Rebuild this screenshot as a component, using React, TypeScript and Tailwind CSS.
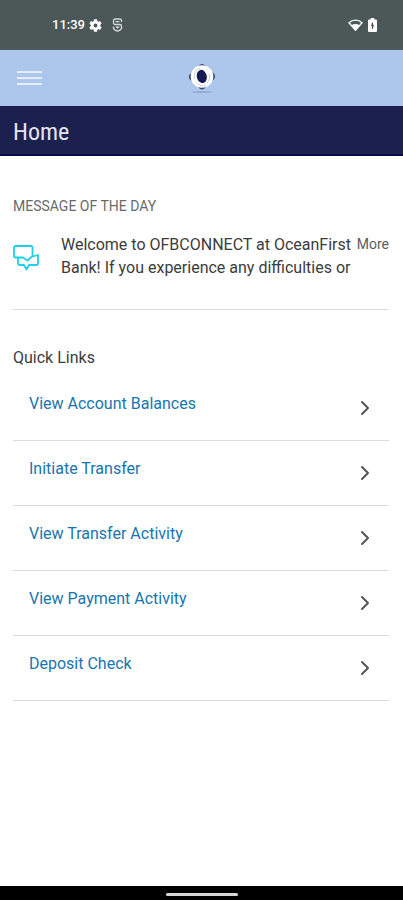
import { ChevronRight } from "lucide-react";

const quickLinks = [
  "View Account Balances",
  "Initiate Transfer",
  "View Transfer Activity",
  "View Payment Activity",
  "Deposit Check",
];

function StatusBar() {
  return (
    <div className="flex h-[50px] items-center justify-between bg-[#4c5757] pl-[52px] pr-[26px] text-white">
      <div className="flex items-center">
        <span className="w-[30px] text-[13px] font-medium leading-4">11:39</span>
        {/* Settings */}
        <svg className="ml-[7px] h-[13px] w-[13px]" viewBox="2 2 20 20" fill="currentColor" aria-hidden="true">
          <path d="M19.14 12.94c.04-.3.06-.61.06-.94s-.02-.64-.07-.94l2.03-1.58a.49.49 0 0 0 .12-.61l-1.92-3.32a.49.49 0 0 0-.59-.22l-2.39.96c-.5-.38-1.03-.7-1.62-.94l-.36-2.54a.48.48 0 0 0-.48-.41h-3.84a.47.47 0 0 0-.47.41l-.36 2.54c-.59.24-1.13.57-1.62.94l-2.39-.96a.48.48 0 0 0-.59.22L2.74 8.87a.47.47 0 0 0 .12.61l2.03 1.58c-.05.3-.09.63-.09.94s.02.64.07.94l-2.03 1.58a.49.49 0 0 0-.12.61l1.92 3.32c.12.22.37.29.59.22l2.39-.96c.5.38 1.03.7 1.62.94l.36 2.54c.05.24.24.41.48.41h3.84c.24 0 .44-.17.47-.41l.36-2.54c.59-.24 1.13-.56 1.62-.94l2.39.96c.22.08.47 0 .59-.22l1.92-3.32a.47.47 0 0 0-.12-.61l-2.01-1.58zM12 15a3 3 0 1 1 0-6 3 3 0 0 1 0 6z" />
        </svg>
        {/* Security badge */}
        <svg className="ml-[10px] h-[14px] w-[11px] text-[#d5dada]" viewBox="0 0 11 14" fill="none" stroke="currentColor" strokeWidth="1.3" aria-hidden="true">
          <path d="M9.500 4V2.500A1.500 1.500 0 0 0 8 1H3a1.500 1.500 0 0 0-1.500 1.500V5A1.500 1.500 0 0 0 3 6.500h5A1.500 1.500 0 0 1 9.500 8v2.200C9 12 7.500 12.800 5.500 13 3.500 12.800 2 12 1.500 10.200V8.500" />
          <path d="M3.500 3.700h4" />
          <path d="M3.700 8.800h3.600l-1.800 1.800z" fill="currentColor" strokeWidth=".6" />
        </svg>
      </div>
      <div className="flex items-center gap-[5px]">
        {/* Wifi */}
        <svg className="h-3 w-[15px]" viewBox="0 0 15 12" aria-hidden="true">
          <path d="M1 3.800C4.600.3 10.400.3 14 3.800L7.500 11.300z" fill="none" stroke="currentColor" strokeWidth="1.300" />
          <path d="M3.500 6.200c2.400-1.700 5.600-1.700 8 0l-4 5z" fill="currentColor" />
        </svg>
        {/* Battery */}
        <svg className="h-[14px] w-[9px]" viewBox="0 0 9 14" aria-hidden="true">
          <path d="M2.700 0h3.600v1.400H8a1 1 0 0 1 1 1V13a1 1 0 0 1-1 1H1a1 1 0 0 1-1-1V2.400a1 1 0 0 1 1-1h1.700z" fill="currentColor" />
          <path d="M4 4.500h1v2.200h1L4.800 11h-.8V8.300H3z" fill="#4c5757" />
        </svg>
      </div>
    </div>
  );
}

function Logo() {
  return (
    <svg className="h-8 w-8" viewBox="0 0 32 32" role="img" aria-label="OceanFirst Bank">
      <ellipse cx="16" cy="30" rx="10" ry="1" fill="#95abd0" />
      <path d="M12 4.500c2-3.500 6-3.500 8 0zM5.500 11c-3.500 2-3.500 5.500 0 8zM26 10c4 2.500 4 6.500 0 9zM12 24.500c2 4 6 4 8 0z" fill="#414a6e" />
      <circle cx="16" cy="14.500" r="11.300" fill="#fff" />
      <ellipse cx="15.800" cy="14.500" rx="5" ry="6.700" fill="#171c50" transform="rotate(-12 15.800 14.500)" />
      <path d="M8.500 17C7.500 12 9.500 8 14 6.200M10.500 20.500c3 3.300 6.500 4 10 2.800M23.500 12c.7 4-.3 7-2.800 9.300" fill="none" stroke="#b9c1d6" strokeWidth=".8" />
      <path d="M12 20.500c2.500 1.800 5.500 2 8.500.8" fill="none" stroke="#fff" strokeWidth="1.600" />
    </svg>
  );
}

function MessageIcon() {
  return (
    <svg className="h-[26px] w-[26px] shrink-0" viewBox="0 0 26 26" fill="none" stroke="#1fd0ea" strokeWidth="1.800" strokeLinejoin="round" aria-hidden="true">
      <path d="M5 12.500H2.500A1.500 1.500 0 0 1 1 11V2.500A1.500 1.500 0 0 1 2.500 1H18a1.500 1.500 0 0 1 1.500 1.500V11L14.500 15.500 10 12.500H5v6A1.500 1.500 0 0 0 6.500 20H11l2.500 4.500L16 20h7.500a1.500 1.500 0 0 0 1.500-1.500V10l-5.500 1.500" />
    </svg>
  );
}

export default function App() {
  return (
    <div className="flex min-h-screen flex-col bg-white font-['Roboto',sans-serif]">
      <StatusBar />

      <header className="grid h-14 grid-cols-3 items-center bg-[#adc6ec] px-[17px]">
        <button type="button" aria-label="Open menu" className="flex w-[25px] flex-col gap-1">
          <span className="h-[2px] bg-[#e4edfa]" />
          <span className="h-[2px] bg-[#e4edfa]" />
          <span className="h-[2px] bg-[#e4edfa]" />
        </button>
        <div className="flex justify-center">
          <Logo />
        </div>
      </header>

      <div className="flex h-[50px] items-center border-b-2 border-[#05084a] bg-[#1c204f] px-[13px] pt-1">
        <h1 className="font-['Roboto_Condensed','Liberation_Sans_Narrow',sans-serif] text-2xl leading-8 text-[#e4e5ee]">
          Home
        </h1>
      </div>

      <main className="flex-1 pl-[13px] pr-[14px] pt-10">
        <section className="border-b border-[#dcdcdc] pb-[30px]">
          <h2 className="text-sm leading-5 text-[#6a6a6a]">MESSAGE OF THE DAY</h2>
          <div className="mt-[17px] flex items-start">
            <div className="pt-3">
              <MessageIcon />
            </div>
            <p className="ml-[22px] line-clamp-2 min-w-0 flex-1 text-base leading-[23px] text-[#3c3c3c]">
              Welcome to OFBCONNECT at OceanFirst Bank! If you experience any difficulties or
            </p>
            <a href="#message" className="ml-1 shrink-0 text-sm leading-[23px] text-[#5c5c5c]">
              More
            </a>
          </div>
        </section>

        <section className="pt-[38px]">
          <h2 className="text-base leading-5 text-[#3c3c3c]">Quick Links</h2>
          <ul className="mt-2">
            {quickLinks.map((label) => (
              <li key={label} className="border-b border-[#dcdcdc]">
                <a href="#" className="flex h-16 items-start justify-between pl-4 pr-3 pt-4 text-[#1875ae]">
                  <span className="text-base leading-6">{label}</span>
                  <ChevronRight className="mt-1 h-6 w-6 text-[#555]" strokeWidth={2} />
                </a>
              </li>
            ))}
          </ul>
        </section>
      </main>

      <footer className="flex h-[14px] items-center justify-center bg-black pt-[3px]">
        <div className="h-[3px] w-[72px] rounded-full bg-[#d6d6d6]" />
      </footer>
    </div>
  );
}
